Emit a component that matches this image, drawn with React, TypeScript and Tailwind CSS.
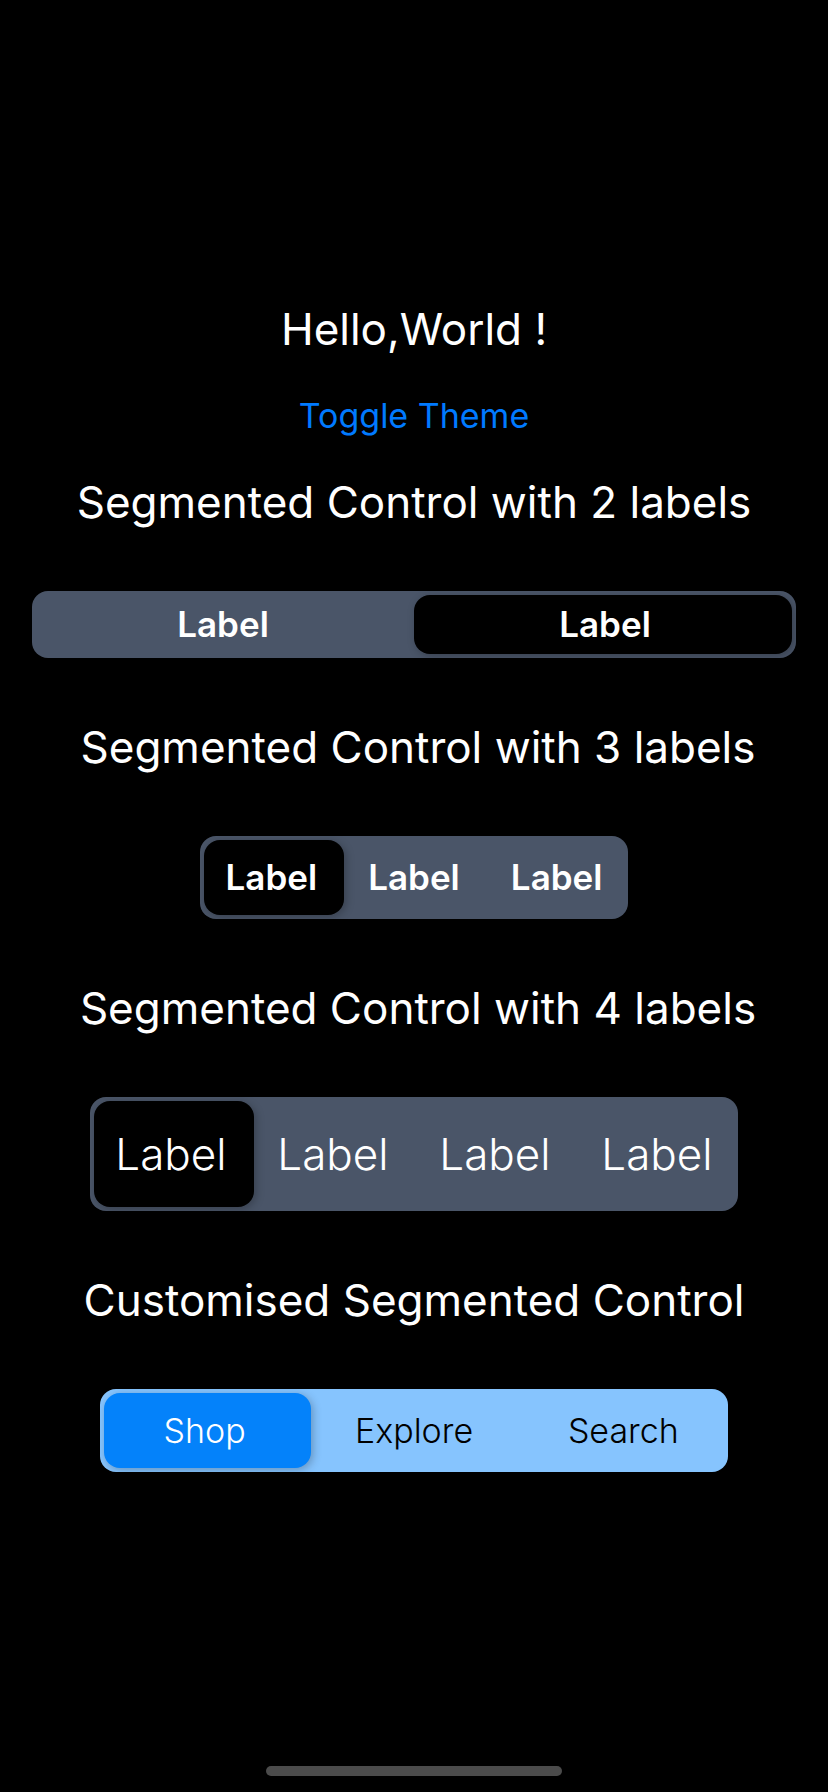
import { useState, type ReactNode } from "react";

type SegmentedControlProps = {
  name: string;
  labels: string[];
  initial: number;
  className: string;
  segmentClass: string;
  thumbClass?: string;
  activeText?: string;
};

function SegmentedControl({
  name,
  labels,
  initial,
  className,
  segmentClass,
  thumbClass = "bg-black",
  activeText = "",
}: SegmentedControlProps) {
  const [selected, setSelected] = useState(initial);
  return (
    <div role="group" aria-label={name} className={`relative grid max-w-full auto-cols-fr grid-flow-col rounded-2xl py-1 ${className}`}>
      {/* Thumb that slides behind the selected label */}
      <span
        aria-hidden="true"
        className={`absolute inset-y-1 left-1 rounded-2xl shadow-[2px_2px_8px_rgba(0,0,0,0.25)] transition-transform ${thumbClass}`}
        style={{ width: `calc((100% - 8px) / ${labels.length})`, transform: `translateX(${selected * 100}%)` }}
      />
      {labels.map((label, i) => (
        <button
          key={i}
          type="button"
          aria-pressed={selected === i}
          onClick={() => setSelected(i)}
          className={`relative text-center ${segmentClass} ${selected === i ? activeText : ""}`}
        >
          {label}
        </button>
      ))}
    </div>
  );
}

function Section({ title, titleClass = "", children }: { title: string; titleClass?: string; children: ReactNode }) {
  return (
    <section className="flex w-full flex-col items-center gap-[61px]">
      <h2 className={`text-center text-[44px] leading-[56px] ${titleClass}`}>{title}</h2>
      {children}
    </section>
  );
}

const repeated = (count: number) => Array.from({ length: count }, () => "Label");

export default function App() {
  return (
    <main className="flex min-h-screen flex-col items-center bg-black px-8 pt-[301px] pb-4 font-['Inter',sans-serif] text-white">
      <h1 className="text-[44px] leading-[56px]">Hello,World !</h1>
      <button type="button" className="mt-9 mb-[35px] text-[34px] leading-[46px] text-[#007aff]">
        Toggle Theme
      </button>
      <div className="flex w-full flex-col gap-[61px]">
        <Section title="Segmented Control with 2 labels">
          <SegmentedControl name="Two labels" labels={repeated(2)} initial={1} className="w-full bg-[#4a5568]" segmentClass="h-[59px] text-[35px] font-semibold" />
        </Section>
        <Section title="Segmented Control with 3 labels" titleClass="pl-2">
          <SegmentedControl name="Three labels" labels={repeated(3)} initial={0} className="w-[428px] bg-[#4a5568]" segmentClass="h-[75px] text-[35px] font-semibold" />
        </Section>
        <Section title="Segmented Control with 4 labels" titleClass="pl-2">
          <SegmentedControl name="Four labels" labels={repeated(4)} initial={0} className="w-[648px] bg-[#4a5568]" segmentClass="h-[106px] text-[44px] font-light" />
        </Section>
        <Section title="Customised Segmented Control">
          <SegmentedControl
            name="Sections"
            labels={["Shop", "Explore", "Search"]}
            initial={0}
            className="w-[628px] bg-[#86c4fe] text-black"
            segmentClass="h-[75px] text-[34px] font-light"
            thumbClass="bg-[#0482fa]"
            activeText="text-white"
          />
        </Section>
      </div>
      <div className="mt-auto h-[10px] w-[296px] rounded-full bg-[#4b4b4b]" />
    </main>
  );
}
